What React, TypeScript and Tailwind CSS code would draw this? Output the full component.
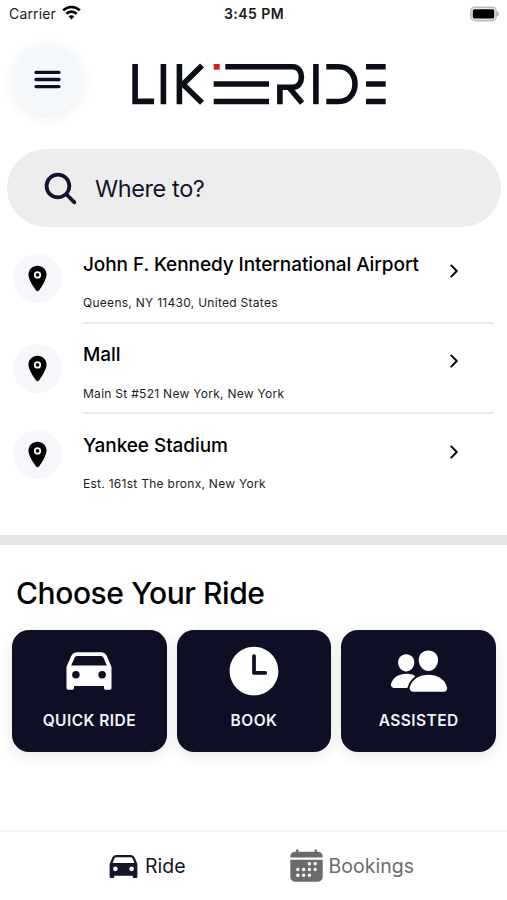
import {
  IoMenu,
  IoSearch,
  IoLocation,
  IoChevronForward,
  IoCar,
  IoTime,
  IoPeople,
  IoCalendar,
} from 'react-icons/io5';

const places = [
  { title: 'John F. Kennedy International Airport', address: 'Queens, NY 11430, United States' },
  { title: 'Mall', address: 'Main St #521 New York, New York' },
  { title: 'Yankee Stadium', address: 'Est. 161st The bronx, New York' },
];

const rides = [
  { label: 'QUICK RIDE', icon: IoCar },
  { label: 'BOOK', icon: IoTime },
  { label: 'ASSISTED', icon: IoPeople },
];

function StatusBar() {
  return (
    <div className="grid h-7 grid-cols-3 items-center pl-[9px] pr-[8px] text-[14px] text-[#1a1a1a]">
      <div className="-mt-[1px] flex items-center gap-[6px]">
        <span className="tracking-[0.15px]">Carrier</span>
        <svg className="-mt-[2px]" width="19" height="15" viewBox="0 0 19 15" fill="none" stroke="#000" strokeWidth="2.7">
          <path d="M1.2 5.4a11.8 11.8 0 0 1 16.6 0" />
          <path d="M4.4 8.8a7.2 7.2 0 0 1 10.2 0" />
          <path d="M9.5 14.4 6.7 11.5a4 4 0 0 1 5.6 0z" fill="#000" stroke="none" />
        </svg>
      </div>
      <span className="-mt-[1px] text-center font-semibold tracking-[0.45px]">3:45 PM</span>
      <svg className="-mt-[1px] ml-auto" width="29" height="16" viewBox="0 0 29 16">
        <rect x="0.8" y="1.2" width="25.4" height="13.4" rx="4" fill="#eee" stroke="#bdbdbd" strokeWidth="1.6" />
        <rect x="2.8" y="3.2" width="21.4" height="9.4" rx="1.6" fill="#000" />
        <path d="M27.2 5.6c2 .6 2 4 0 4.6z" fill="#a8a8a8" />
      </svg>
    </div>
  );
}

function Logo() {
  return (
    <svg width="256" height="42" viewBox="131 63 256 42" fill="none" stroke="#0a0e17" strokeWidth="5.6">
      <path d="M135.1 64v37.4h19" />
      <path d="M163.4 64v40.2M179.4 64v40.2" />
      <path d="M202 65.5 183 84.2 202 102.7" />
      <path d="M213.7 84H269M213.7 101.5H269" />
      <path d="M225.3 66.7h67.5c11.5 0 11.5 20.6 0 20.6h-12.9v16.9" />
      <path d="m289.5 88 12.6 15" />
      <path d="M315.9 64v40.2" />
      <path d="M326.3 66.7h12.5c21.6 0 21.6 34.8 0 34.8h-12.5" />
      <path d="M366 66.7h19.7M366 84h19.7M366 101.500h19.7" />
      <rect x="213.7" y="64" width="6" height="5.7" fill="#cf2026" stroke="none" />
    </svg>
  );
}

export default function App() {
  return (
    <div className="flex h-[900px] w-full flex-col overflow-hidden bg-white font-['Inter','Liberation_Sans',sans-serif] text-black">
      <StatusBar />

      <header className="flex h-[121px] items-start pl-[12px] pt-[15px]">
        <button className="flex h-[71px] w-[71px] items-center justify-center rounded-full bg-[#f5f8fb] pt-[1px] shadow-[0_4px_14px_rgba(0,0,0,0.07)]">
          <IoMenu className="h-[35px] w-[35px] text-[#0d0d26]" />
        </button>
        <div className="ml-[48px] mt-[20px]">
          <Logo />
        </div>
      </header>

      <div className="ml-[7px] mr-[6px] flex h-[78px] shrink-0 items-center rounded-full bg-[#ededed] pl-[34px] text-[#14142b]">
        <IoSearch className="h-[39px] w-[39px]" />
        <span className="ml-[15px] mt-[2px] text-[23.5px] tracking-[-0.4px]">Where to?</span>
      </div>

      <ul className="h-[308px] shrink-0 pt-[6px]">
        {places.map((place, index) => (
          <li key={place.title} className="flex h-[90.5px] pl-[13px] pr-[13px]">
            <div
              className={`flex h-[49px] w-[49px] items-center justify-center rounded-full bg-[#f5f7fa] ${
                index === 2 ? 'mt-[16px]' : 'mt-[20.5px]'
              }`}
            >
              <IoLocation className="h-[29px] w-[29px]" />
            </div>
            <div
              className={`ml-[21px] flex flex-1 justify-between ${
                index < 2 ? 'border-b-2 border-[#eaeaea]' : ''
              }`}
            >
              <div>
                <h3 className="mt-[17.5px] whitespace-nowrap text-[19px] font-medium leading-[28px] tracking-[-0.08px]">{place.title}</h3>
                <p className="mt-[15.5px] text-[12px] leading-[18px] tracking-[0.28px] text-[#1c1c1c]">{place.address}</p>
              </div>
              <IoChevronForward className="mr-[30px] mt-[27.5px] h-[20px] w-[20px]" />
            </div>
          </li>
        ))}
      </ul>

      <div className="h-[10px] shrink-0 bg-[#e5e5e5]" />

      <section className="flex-1">
        <h2 className="ml-[16px] mt-[28px] text-[30px] font-medium leading-[40px] tracking-[-0.42px]">Choose Your Ride</h2>
        <div className="mt-[17px] grid grid-cols-3 gap-[10px] pl-[12px] pr-[11px]">
          {rides.map((ride) => {
            const Icon = ride.icon;
            return (
              <button
                key={ride.label}
                className="flex h-[122px] flex-col items-center rounded-[17px] bg-[#0e0e25] pt-[11px] text-white shadow-[0_4px_14px_rgba(0,0,0,0.1)]"
              >
                <Icon className="h-[60px] w-[60px]" />
                <span className="mt-[8px] text-[15.5px] font-semibold leading-[24px] tracking-[0.45px] text-[#f0f2fc]">
                  {ride.label}
                </span>
              </button>
            );
          })}
        </div>
      </section>

      <nav className="flex h-[70px] shrink-0 border-t-2 border-[#f5f5f5] pl-[105px] text-[19.5px]">
        <div className="flex h-[70px] items-center text-[#14142b]">
          <IoCar className="-mt-[2px] h-[37px] w-[37px]" />
          <span className="ml-[3px]">Ride</span>
        </div>
        <div className="ml-[102px] flex h-[70px] items-center text-[#6b6b6b]">
          <IoCalendar className="-mt-[3px] h-[37px] w-[37px]" />
          <span className="ml-[4px]">Bookings</span>
        </div>
      </nav>
    </div>
  );
}
